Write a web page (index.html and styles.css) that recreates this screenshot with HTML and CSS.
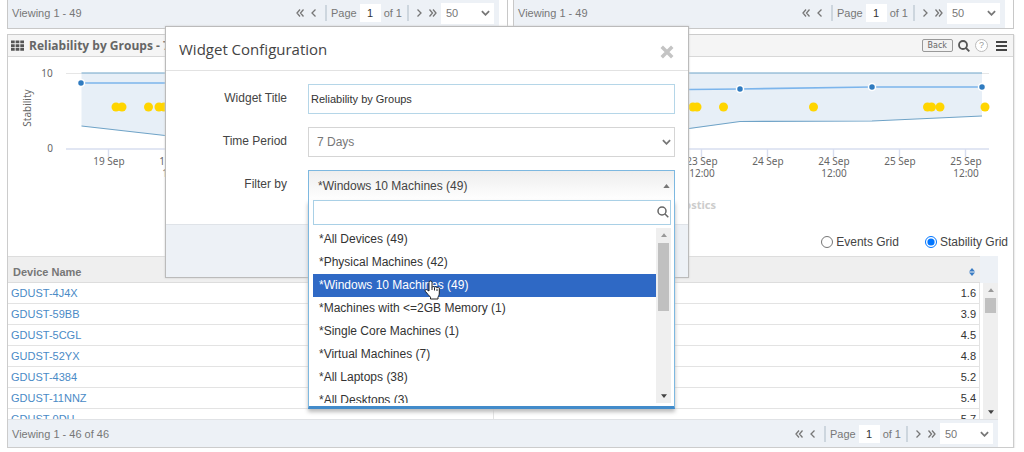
FILE: index.html
```html
<!DOCTYPE html>
<html lang="en">
<head>
<meta charset="utf-8">
<title>Widget Configuration</title>
<link rel="stylesheet" href="styles.css">
</head>
<body>
<svg class="defs" aria-hidden="true">
  <symbol id="first" viewBox="0 0 8 8"><path d="M4 .5 1 4l3 3.500M7.500.5l-3 3.500 3 3.500"/></symbol>
  <symbol id="prev" viewBox="0 0 8 8"><path d="M5.500.5 2 4l3.500 3.500"/></symbol>
  <symbol id="next" viewBox="0 0 8 8"><path d="M2.500.5 6 4 2.500 7.500"/></symbol>
  <symbol id="last" viewBox="0 0 8 8"><path d="M.5.5l3 3.500-3 3.500M4 .5 7 4 4 7.500"/></symbol>
  <symbol id="chevron" viewBox="0 0 10 6"><path d="M1 1l4 4 4-4"/></symbol>
  <symbol id="search" viewBox="0 0 12 12"><circle cx="5" cy="5" r="4"/><path d="M8 8l3.300 3.300"/></symbol>
  <symbol id="up" viewBox="0 0 8 5"><path d="M0 5 4 0l4 5z"/></symbol>
  <symbol id="down" viewBox="0 0 8 5"><path d="M0 0h8L4 5z"/></symbol>
</svg>

<main class="page">
  <div class="top-row">
    <section class="panel">
      <footer class="bar">
        <span>Viewing 1 - 49</span>
        <div class="pager">
          <button aria-label="First page"><svg class="line"><use href="#first"/></svg></button>
          <button aria-label="Previous page"><svg class="line"><use href="#prev"/></svg></button>
          <i class="rule"></i>
          <label for="page-a">Page</label><input id="page-a" class="page-no" value="1"><span>of 1</span>
          <i class="rule"></i>
          <button aria-label="Next page"><svg class="line"><use href="#next"/></svg></button>
          <button aria-label="Last page"><svg class="line"><use href="#last"/></svg></button>
          <span class="size"><select aria-label="Rows per page"><option>50</option></select><svg class="line"><use href="#chevron"/></svg></span>
        </div>
      </footer>
    </section>
    <section class="panel">
      <footer class="bar">
        <span>Viewing 1 - 49</span>
        <div class="pager">
          <button aria-label="First page"><svg class="line"><use href="#first"/></svg></button>
          <button aria-label="Previous page"><svg class="line"><use href="#prev"/></svg></button>
          <i class="rule"></i>
          <label for="page-b">Page</label><input id="page-b" class="page-no" value="1"><span>of 1</span>
          <i class="rule"></i>
          <button aria-label="Next page"><svg class="line"><use href="#next"/></svg></button>
          <button aria-label="Last page"><svg class="line"><use href="#last"/></svg></button>
          <span class="size"><select aria-label="Rows per page"><option>50</option></select><svg class="line"><use href="#chevron"/></svg></span>
        </div>
      </footer>
    </section>
  </div>

  <section class="panel widget">
    <header class="widget-head">
      <svg class="grid-icon" viewBox="0 0 14 12"><path d="M0 0h4v3H0zM5 0h4v3H5zM10 0h4v3h-4zM0 4h4v3H0zM5 4h4v3H5zM10 4h4v3h-4zM0 8h4v3H0zM5 8h4v3H5zM10 8h4v3h-4z"/></svg>
      <h2>Reliability by Groups - 7 Days</h2>
      <button class="back">Back</button>
      <button aria-label="Search"><svg class="line tool"><use href="#search"/></svg></button>
      <button class="help" aria-label="Help">?</button>
      <button aria-label="Menu"><svg class="menu" viewBox="0 0 11 10"><path d="M0 1h11M0 5h11M0 9h11"/></svg></button>
    </header>

    <svg class="chart" viewBox="8 57 1005 174" role="img" aria-label="Stability by day">
      <path class="gridline" d="M66 73.500H989"/>
      <path class="area" d="M81.500 73H982V116L872 121L740 121.500L689 129L430 160L165 135.500L81.500 126z"/>
      <path class="below" d="M165 149.500H689V136H165z"/>
      <path class="bound" d="M81.500 73H982M81.500 126L165 135.500M689 128.500L740 121.500L872 121L982 116"/>
      <path class="axis" d="M66 149H989M108.500 149v8M174.500 149v8M701.500 149v8M767.500 149v8M833.500 149v8M899.500 149v8M965.500 149v8"/>
      <path class="series" d="M81 83H165L689 89.500L740 89L872 87H982"/>
      <g class="marker"><circle cx="81" cy="83" r="3.500"/><circle cx="740" cy="89" r="3.500"/><circle cx="872" cy="87" r="3.500"/><circle cx="982" cy="87" r="3.500"/></g>
      <g class="event"><circle cx="116" cy="107" r="4.500"/><circle cx="122" cy="107" r="4.500"/><circle cx="148.500" cy="107" r="4.500"/><circle cx="159" cy="107" r="4.500"/><circle cx="164" cy="107" r="4.500"/><circle cx="693" cy="107" r="4.500"/><circle cx="697" cy="107" r="4.500"/><circle cx="723.500" cy="107" r="4.500"/><circle cx="813.500" cy="107" r="4.500"/><circle cx="927.500" cy="107" r="4.500"/><circle cx="931.500" cy="107" r="4.500"/><circle cx="940" cy="107" r="4.500"/><circle cx="985" cy="107" r="4.500"/></g>
      <g class="tick">
        <text x="47" y="77">10</text><text x="50" y="152">0</text>
        <text x="109" y="165">19 Sep</text>
        <text x="175" y="165">19 Sep</text><text x="175" y="177">12:00</text>
        <text x="702" y="165">23 Sep</text><text x="702" y="177">12:00</text>
        <text x="768" y="165">24 Sep</text>
        <text x="834" y="165">24 Sep</text><text x="834" y="177">12:00</text>
        <text x="900" y="165">25 Sep</text>
        <text x="966" y="165">25 Sep</text><text x="966" y="177">12:00</text>
        <text transform="translate(31 108) rotate(-90)">Stability</text>
      </g>
      <text class="legend" x="716" y="209">Diagnostics</text>
    </svg>

    <div class="views">
      <label><input type="radio" name="view">Events Grid</label>
      <label><input type="radio" name="view" checked>Stability Grid</label>
    </div>

    <div class="data">
      <div class="rows">
        <table>
          <thead><tr><th>Device Name</th><th class="num"><svg class="sort" viewBox="0 0 6 8"><path d="M0 3.500 3 0l3 3.500zM0 4.500h6L3 8z"/></svg></th></tr></thead>
          <tbody>
            <tr><td><a href="#">GDUST-4J4X</a></td><td class="num">1.6</td></tr>
            <tr><td><a href="#">GDUST-59BB</a></td><td class="num">3.9</td></tr>
            <tr><td><a href="#">GDUST-5CGL</a></td><td class="num">4.5</td></tr>
            <tr><td><a href="#">GUDST-52YX</a></td><td class="num">4.8</td></tr>
            <tr><td><a href="#">GDUST-4384</a></td><td class="num">5.2</td></tr>
            <tr><td><a href="#">GDUST-11NNZ</a></td><td class="num">5.4</td></tr>
            <tr><td><a href="#">GDUST-0DH</a></td><td class="num">5.7</td></tr>
          </tbody>
        </table>
      </div>
      <div class="scroll-side"><div class="scrollbar"><svg class="arrow dim"><use href="#up"/></svg><i class="thumb short"></i><svg class="arrow"><use href="#down"/></svg></div></div>
    </div>
    <footer class="bar bottom">
      <span>Viewing 1 - 46 of 46</span>
      <div class="pager">
        <button aria-label="First page"><svg class="line"><use href="#first"/></svg></button>
        <button aria-label="Previous page"><svg class="line"><use href="#prev"/></svg></button>
        <i class="rule"></i>
        <label for="page-c">Page</label><input id="page-c" class="page-no" value="1"><span>of 1</span>
        <i class="rule"></i>
        <button aria-label="Next page"><svg class="line"><use href="#next"/></svg></button>
        <button aria-label="Last page"><svg class="line"><use href="#last"/></svg></button>
        <span class="size"><select aria-label="Rows per page"><option>50</option></select><svg class="line"><use href="#chevron"/></svg></span>
      </div>
    </footer>
  </section>
</main>

<div class="modal" role="dialog" aria-labelledby="modal-title">
  <header class="modal-head">
    <h1 id="modal-title">Widget Configuration</h1>
    <button aria-label="Close"><svg class="close" viewBox="0 0 12 12"><path d="M1.500 1.500l9 9M10.500 1.500l-9 9"/></svg></button>
  </header>
  <div class="fields">
    <label for="title">Widget Title</label>
    <input id="title" class="field" value="Reliability by Groups">
    <label for="period">Time Period</label>
    <span class="picker"><select id="period" class="field"><option>7 Days</option></select><svg class="line"><use href="#chevron"/></svg></span>
    <label for="filter">Filter by</label>
    <div class="combo">
      <button id="filter" class="combo-value" aria-expanded="true">*Windows 10 Machines (49)<svg class="caret"><use href="#up"/></svg></button>
      <div class="drop">
        <div class="search"><input aria-label="Search filters"><svg class="line tool"><use href="#search"/></svg></div>
        <div class="options">
          <ul role="listbox">
            <li role="option">*All Devices (49)</li>
            <li role="option">*Physical Machines (42)</li>
            <li role="option" class="active" aria-selected="true">*Windows 10 Machines (49)</li>
            <li role="option">*Machines with &lt;=2GB Memory (1)</li>
            <li role="option">*Single Core Machines (1)</li>
            <li role="option">*Virtual Machines (7)</li>
            <li role="option">*All Laptops (38)</li>
            <li role="option">*All Desktops (3)</li>
          </ul>
          <div class="scrollbar"><svg class="arrow dim"><use href="#up"/></svg><i class="thumb"></i><svg class="arrow"><use href="#down"/></svg></div>
        </div>
      </div>
    </div>
  </div>
  <footer class="modal-foot"></footer>
</div>
<svg class="pointer" viewBox="0 0 16 20" aria-hidden="true"><path d="M5 11V2.500a1.500 1.500 0 0 1 3 0V7.500a1.300 1.300 0 0 1 2.500 0 1.300 1.300 0 0 1 2.500.6 1.200 1.200 0 0 1 2.300.8V13c0 2-.8 3-1.300 4.200V19H6.500v-1.800C5 15.500 3 13.500 1.300 11.300.6 9.800 2.300 9 3.300 10z"/><path d="M8 7.500V10M10.500 8v2.500M13 9v2"/></svg>
</body>
</html>
```
FILE: styles.css
```css
* { box-sizing: border-box; }

body {
  margin: 0;
  overflow: hidden;
  background: #fff;
  color: #333;
  font: 12px/16px "Liberation Sans", Arial, sans-serif;
}

button, input, select { font: inherit; color: inherit; margin: 0; }
button { display: flex; padding: 0; border: 0; background: none; cursor: pointer; }
input:focus, select:focus { outline: none; }
select { appearance: none; }

.defs { position: absolute; width: 0; height: 0; }
.line { display: block; width: 8px; height: 8px; fill: none; stroke: #777; stroke-width: 1.3; }

.page { padding: 0 10px 0 7px; }
.top-row { display: flex; gap: 5px; margin-bottom: 5px; }
.panel { border: 1px solid #c8c8c8; background: #fff; }
.top-row .panel { flex: 1; border-top: 0; padding-right: 8px; }

.bar {
  display: flex;
  align-items: center;
  justify-content: space-between;
  height: 28px;
  padding: 0 5px 2px 4px;
  background: #edf1f6;
  color: #777;
  font-size: 11px;
}
.bar.bottom { margin-right: 15px; border-top: 1px solid #e0e2e5; padding-bottom: 0; }
.pager { display: flex; align-items: center; gap: 3px; }
.pager button { width: 11px; justify-content: center; }
.rule { width: 2px; height: 16px; margin: 0 1px 0 2px; background: #cdd6de; }
.page-no { width: 21px; height: 18px; padding: 0; border: 0; background: #fff; color: #333; text-align: center; }
.size { position: relative; }
.size select { display: block; width: 53px; height: 21px; padding: 0 5px; border: 0; background: #fff; }
.size .line, .picker .line { position: absolute; top: 50%; right: 4px; width: 9px; height: 6px; margin-top: -3px; stroke-width: 2; }

.widget { border-color: #ccc; box-shadow: 1px 1px 1px #eee; }
.widget-head {
  display: flex;
  align-items: center;
  gap: 5px;
  height: 22px;
  padding: 0 6px 0 3px;
  border-bottom: 1px solid #d8d8d8;
  background: #f5f5f5;
}
.grid-icon { width: 13px; height: 12px; fill: #555; }
.widget-head h2 { flex: 1; margin: 0; color: #666; font: bold 12px/16px "Open Sans", sans-serif; }
.back {
  padding: 0 5px;
  border: 1px solid #999;
  border-radius: 2px;
  background: #f2f2f2;
  color: #666;
  font: 8px/11px "DejaVu Sans", sans-serif;
}
.tool { width: 12px; height: 12px; stroke: #555; stroke-width: 1.8; }
.help {
  justify-content: center;
  width: 13px;
  height: 13px;
  border: 1px solid #bbb;
  border-radius: 50%;
  background: #fff;
  color: #999;
  font-size: 9px;
  line-height: 11px;
}
.menu { width: 11px; height: 10px; margin-left: 3px; stroke: #444; stroke-width: 2; }

.chart { display: block; width: 100%; height: auto; }
.gridline { stroke: #e6e6e6; fill: none; }
.area { fill: #e7eff7; }
.below { fill: #fff; }
.bound { fill: none; stroke: #6fa3c7; stroke-width: 1.2; }
.axis { fill: none; stroke: #d8def0; stroke-width: 1.4; }
.series { fill: none; stroke: #7cb5ec; stroke-width: 1.7; }
.marker { fill: #2f7bc0; stroke: #fff; stroke-width: 1.5; }
.event { fill: #ffd500; }
.tick { fill: #666; font: 10px "Noto Sans", sans-serif; text-anchor: middle; }
.legend { fill: #ccc; font: bold 11px "Noto Sans", sans-serif; text-anchor: end; }

.views { display: flex; justify-content: flex-end; gap: 26px; height: 25px; padding: 3px 5px 0 0; color: #444; }
.views label { display: flex; align-items: center; gap: 3px; height: 16px; }
.views input { width: 12px; height: 12px; }

.data { display: flex; height: 163px; margin-right: 15px; overflow: hidden; }
.rows { flex: 1; }
.data table { width: 100%; border-collapse: collapse; table-layout: fixed; font-size: 11px; }
.data th { height: 26px; padding: 4px 5px 0; border: solid #ddd; border-width: 1px 0; background: #efefef; color: #777; text-align: left; }
.data td { height: 21px; padding: 0 3px 1px; border-bottom: 1px solid #e3e3e3; border-right: 1px solid #e3e3e3; line-height: 16px; }
.data .num { text-align: right; }
.data a { color: #4a8ac6; text-decoration: none; }
.sort { width: 6px; height: 8px; fill: #3a7cc4; }
.scroll-side { display: flex; justify-content: flex-end; width: 18px; padding-top: 27px; background: linear-gradient(#edf1f6 27px, #fff 27px); }

.scrollbar { display: flex; flex-direction: column; align-items: center; width: 15px; padding: 5px 0; background: #efefef; }
.arrow { width: 6px; height: 4px; fill: #444; }
.arrow.dim { fill: #999; }
.thumb { width: 11px; height: 68px; margin: 6px 0 auto; background: #c0c0c0; }
.thumb.short { height: 15px; }

.modal {
  position: absolute;
  top: 26px;
  left: 165px;
  width: 524px;
  border: 1px solid #bbb;
  background: #fff;
  box-shadow: 0 0 2px #ccc;
}
.modal-head {
  display: flex;
  align-items: center;
  justify-content: space-between;
  height: 44px;
  padding: 0 14px 0 13px;
  border-bottom: 1px solid #e2e2e2;
}
.modal-head h1 { margin: 0; color: #444; font: 15px/20px "Open Sans", sans-serif; }
.close { width: 14px; height: 14px; margin-top: 6px; stroke: #c4c4c4; stroke-width: 3; }
.fields {
  display: grid;
  grid-template-columns: 121px 1fr;
  grid-auto-rows: 30px;
  gap: 13px 21px;
  padding: 13px 13px 24px 0;
}
.fields > label { padding-top: 6px; text-align: right; color: #444; }
.field { display: block; width: 100%; height: 30px; padding: 0 8px; border: 1px solid #d5d5d5; background: #fff; color: #777; }
#title { padding: 0 2px; border-color: #b5d6e8; color: #333; font-size: 11px; }
.picker { position: relative; }
.modal-foot { height: 53px; border-top: 1px solid #dfe3e8; background: #edf1f6; }

.combo { position: relative; }
.combo-value {
  align-items: center;
  justify-content: space-between;
  width: 100%;
  height: 30px;
  padding: 0 4px 0 9px;
  border: 1px solid #7db8e0;
  border-bottom: 0;
  background: linear-gradient(#eee, #fff);
  color: #444;
}
.caret { width: 7px; height: 4px; fill: #777; }
.drop {
  position: absolute;
  top: 30px;
  left: 0;
  width: 100%;
  padding: 0 3px 3px 4px;
  border: solid #7db8e0;
  border-width: 0 1px 3px;
  border-bottom-color: #428bca;
  background: #fff;
  box-shadow: 0 3px 4px #bbb;
}
.search { position: relative; }
.search input { display: block; width: 100%; height: 25px; border: 1px solid #a9d0e6; padding: 0 20px 0 5px; background: #fff; }
.search .tool { position: absolute; top: 6px; right: 2px; stroke: #666; stroke-width: 1.5; }
.options { display: flex; height: 175px; margin-top: 3px; overflow: hidden; }
.options ul { flex: 1; margin: 0; padding: 0; list-style: none; }
.options li { height: 23px; padding: 0 6px; line-height: 23px; }
.options .active { background: #2f69c5; color: #fff; }

.pointer { position: absolute; top: 280px; left: 424px; width: 16px; height: 20px; fill: #fff; stroke: #222; stroke-width: 1; }
```
